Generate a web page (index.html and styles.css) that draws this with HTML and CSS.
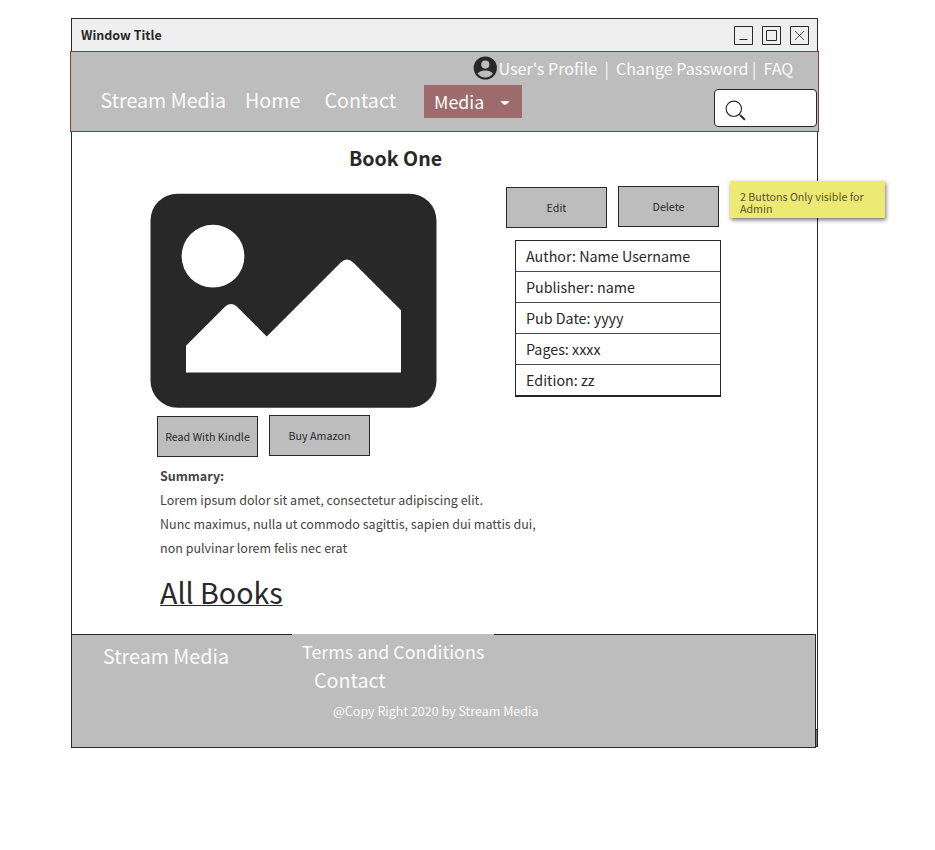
FILE: index.html
```html
<!DOCTYPE html>
<html lang="en">
<head>
<meta charset="utf-8">
<title>Book One</title>
<link rel="stylesheet" href="styles.css">
</head>
<body>
<div class="window">
  <div class="titlebar">
    <span class="window-title">Window Title</span>
    <div class="controls">
      <svg width="19" height="19" viewBox="0 0 19 19"><path d="M.5 .5h18v18h-18zM5.500 13.500h8"/></svg>
      <svg width="19" height="19" viewBox="0 0 19 19"><path d="M.5 .5h18v18h-18zM4.500 4.500h10v10h-10z"/></svg>
      <svg width="19" height="19" viewBox="0 0 19 19"><path d="M.5 .5h18v18h-18z"/><path class="thin" d="M5 5l9 9M14 5l-9 9"/></svg>
    </div>
  </div>

  <header class="header">
    <div class="account">
      <svg class="avatar" width="24" height="24" viewBox="0 0 24 24"><circle cx="12.300" cy="12" r="11.600"/><circle class="face" cx="12.300" cy="8.600" r="4.100"/><path class="face" d="M12.300 14.400c3.500 0 6.900 1.500 7.600 3.400-1.800 2.400-4.500 3.700-7.600 3.700s-5.800-1.300-7.600-3.700c.7-1.900 4.100-3.400 7.600-3.400z"/></svg>
      <span class="profile">User's Profile</span>
      <span>|</span>
      <span>Change Password</span>
      <span>|</span>
      <span>FAQ</span>
    </div>
    <nav class="nav">
      <span class="brand">Stream Media</span>
      <span>Home</span>
      <span>Contact</span>
      <div class="dropdown"><span>Media</span><svg width="10" height="5" viewBox="0 0 10 5"><path d="M.3 0h9.400q-1.200 1.300-3.200 3.200-1.500 1.300-3 0-2-1.900-3.200-3.200z"/></svg></div>
      <div class="search"><svg width="22" height="22" viewBox="0 0 22 22"><circle cx="8.800" cy="8.800" r="7.700"/><path d="M14.200 14.200l1.200 1.200"/><path class="handle" d="M15.300 15.300l4.600 4.600"/></svg></div>
    </nav>
  </header>

  <main class="main">
    <h1 class="title">Book One</h1>
    <div class="columns">
      <div class="media">
        <svg class="cover" width="287" height="215" viewBox="0 0 287 215"><rect x=".5" y=".7" width="286" height="214" rx="27"/><circle class="white" cx="63" cy="63.200" r="31.400"/><path class="white" d="M36 179.400V152.700L75.500 113.200q5.500-4.500 11 0L116.700 143.500 191 69.200q6-5.500 12 0L251 117.200V179.400z"/></svg>
        <div class="buttons">
          <button class="button low">Read With Kindle</button>
          <button class="button">Buy Amazon</button>
        </div>
      </div>
      <div class="details">
        <div class="buttons">
          <button class="button low">Edit</button>
          <button class="button">Delete</button>
        </div>
        <ul class="facts">
          <li>Author: Name Username</li>
          <li>Publisher: name</li>
          <li>Pub Date: yyyy</li>
          <li>Pages: xxxx</li>
          <li>Edition: zz</li>
        </ul>
      </div>
    </div>
    <div class="summary">
      <strong>Summary:</strong>
      <p>Lorem ipsum dolor sit amet, consectetur adipiscing elit.</p>
      <p>Nunc maximus, nulla ut commodo sagittis, sapien dui mattis dui,</p>
      <p>non pulvinar lorem felis nec erat</p>
    </div>
    <a class="all-books">All Books</a>
    <aside class="note">2 Buttons Only visible for Admin</aside>
  </main>

  <footer class="footer">
    <span class="footer-brand">Stream Media</span>
    <div class="footer-links">
      <span class="terms">Terms and Conditions</span>
      <span class="contact">Contact</span>
      <span class="copyright">@Copy Right 2020 by Stream Media</span>
    </div>
  </footer>
</div>
</body>
</html>
```
FILE: styles.css
```css
* { box-sizing: border-box; }

body {
  margin: 0;
  padding: 18px 0 20px 71px;
  background: #fff;
  color: #282828;
  font-family: "Noto Sans CJK SC", "Open Sans", sans-serif;
}

.window {
  position: relative;
  width: 747px;
  height: 729px;
  border: 1px solid #282828;
  background: #fff;
}

.titlebar {
  display: flex;
  justify-content: space-between;
  height: 32px;
  padding: 0 8px 0 9px;
  background: #efefef;
}
.window-title { font-size: 12.5px; font-weight: 700; line-height: 31px; }
.controls { display: flex; gap: 9px; padding-top: 7px; }
.controls path { fill: none; stroke: #282828; }
.controls .thin { stroke-width: .8; }

.header {
  width: 749px;
  height: 81px;
  margin-left: -2px;
  border: 1px solid #8a3a3e;
  background: #bdbdbd;
  color: #fafafa;
}
.account {
  display: grid;
  grid-template-columns: 25.5px 106px 11.5px 136px 11.5px 50px;
  height: 33px;
  padding-left: 402px;
  font-size: 16.1px;
  line-height: 32px;
  white-space: nowrap;
}
.avatar { margin-top: 4px; fill: #282828; }
.avatar .face { fill: #bdbdbd; }

.nav {
  display: grid;
  grid-template-columns: 144.5px 79.5px 99.500px 98px 1fr 103px;
  height: 45px;
  padding: 0 1px 0 29.5px;
  font-size: 19.65px;
  line-height: 30px;
  white-space: nowrap;
}
.dropdown {
  display: flex;
  justify-content: space-between;
  align-items: center;
  height: 33px;
  padding: 0 12px 0 10px;
  background: #9d6b6c;
  font-size: 17.8px;
  line-height: 33px;
}
.dropdown svg { margin-top: 3px; fill: #fafafa; }
.search {
  grid-column: 6;
  height: 38px;
  margin-top: 4px;
  padding: 10px 0 0 10px;
  border: 1px solid #282828;
  border-radius: 4px;
  background: #fff;
}
.search svg { display: block; fill: none; stroke: #282828; stroke-width: 1.1; }
.search .handle { stroke-width: 2; }

.main { position: relative; height: 502px; padding-left: 78px; }
.title {
  width: 491px;
  margin: 0;
  padding-top: 12px;
  font-size: 19.6px;
  line-height: 28px;
  text-align: center;
}
.columns { display: flex; gap: 69px; padding-top: 14px; }
.cover { display: block; margin-top: 7px; fill: #282828; }
.cover .white { fill: #fff; }
.buttons { display: flex; gap: 11px; }
.media .buttons { padding: 7px 0 0 7px; }
.button {
  width: 101px;
  height: 41px;
  padding: 0;
  border: 1px solid #282828;
  background: #bdbdbd;
  color: #282828;
  font-family: inherit;
  font-size: 10.7px;
  line-height: 39px;
}
.low { margin-top: 1px; }
.facts {
  width: 206px;
  margin: 12px 0 0 9px;
  padding: 0;
  border: 1px solid #282828;
  border-bottom-width: 2px;
  list-style: none;
  font-size: 14.3px;
}
.facts li { height: 31px; padding-left: 10px; line-height: 30px; }
.facts li + li { border-top: 1px solid #4a4a4a; }
.facts li:first-child { height: 30px; }

.summary {
  padding: 7px 0 0 10px;
  color: #444;
  font-size: 12.5px;
  line-height: 24px;
}
.summary strong { display: block; }
.summary p { margin: 0; }
.all-books {
  display: block;
  margin: 10px 0 0 10px;
  font-size: 28.6px;
  line-height: 44px;
  text-decoration: underline;
  text-decoration-thickness: 1px;
  text-underline-offset: 1px;
}
.note {
  position: absolute;
  top: 49px;
  left: 658px;
  width: 155px;
  height: 37px;
  padding: 10px 10px 0;
  background: #ecea74;
  box-shadow: 1px 2px 4px rgba(0, 0, 0, .55);
  color: #55542f;
  font-size: 10.7px;
  line-height: 12px;
}

.footer {
  position: relative;
  display: flex;
  width: 745px;
  height: 114px;
  margin-left: -1px;
  border: 1px solid #282828;
  background: #bdbdbd;
  color: #fafafa;
  font-size: 19.7px;
  white-space: nowrap;
}
/* dark sliver where the window frame meets the footer's right edge */
.footer::after {
  content: "";
  position: absolute;
  right: -3px;
  bottom: 0;
  box-sizing: border-box;
  width: 3px;
  height: 18px;
  border: 1px solid #282828;
  background: #777;
}
.footer-brand { width: 220px; padding: 5px 0 0 31px; line-height: 32px; }
.footer-links { display: flex; flex-direction: column; }
.terms {
  width: 202px;
  height: 31px;
  margin-top: -1px;
  padding-left: 10px;
  background: #bdbdbd;
  font-size: 17.9px;
  line-height: 35px;
}
.contact { padding-left: 22px; line-height: 30px; }
.copyright { padding-left: 41px; font-size: 12.5px; line-height: 31px; }
```
